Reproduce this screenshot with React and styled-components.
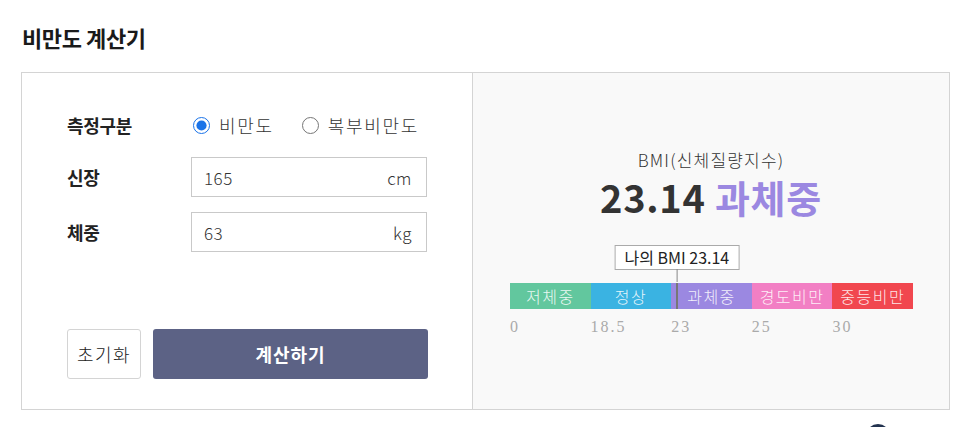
import React, { useState } from "react";
import styled, { createGlobalStyle } from "styled-components";

const GlobalStyle = createGlobalStyle`
  html, body {
    margin: 0;
    padding: 0;
    background: #fff;
    font-family: "Noto Sans CJK KR", "Noto Sans", sans-serif;
    color: #222;
  }
  * { box-sizing: border-box; }
`;

const Page = styled.div`
  position: relative;
  height: 427px;
  overflow: hidden;
  padding: 23px 14px 0 21px;
`;

const Title = styled.h2`
  margin: 0 0 20px 1px;
  font-size: 22px;
  font-weight: 700;
  line-height: 29px;
  letter-spacing: -0.4px;
  color: #1a1a1a;
`;

const Box = styled.div`
  display: grid;
  grid-template-columns: 451px 1fr;
  height: 338px;
  border: 1px solid #d4d4d4;
`;

const Form = styled.div`
  display: flex;
  flex-direction: column;
  padding: 35px 44px 30px 45px;
  border-right: 1px solid #d4d4d4;
  background: #fff;
`;

const Row = styled.div`
  display: grid;
  grid-template-columns: 124px 236px;
  align-items: center;
  height: ${p => p.$h || 40}px;
  margin-bottom: 15px;
`;

const Label = styled.div`
  font-size: 18px;
  font-weight: 700;
  color: #222;
  letter-spacing: -0.3px;
`;

const Options = styled.div`
  display: flex;
  align-items: center;
  gap: 26px;
`;

const Option = styled.label`
  display: flex;
  align-items: center;
  gap: 9px;
  font-size: 18px;
  font-weight: 300;
  letter-spacing: 1.7px;
  color: #333;
  cursor: pointer;
`;

const Radio = styled.input`
  width: 17px;
  height: 17px;
  margin: 0 0 0 2px;
  accent-color: #1a73e8;
`;

const Field = styled.div`
  display: flex;
  align-items: center;
  justify-content: space-between;
  height: 40px;
  padding: 0 14px 0 12px;
  border: 1px solid #c9c9c9;
  font-size: 17px;
  font-weight: 300;
  letter-spacing: 0.5px;
  color: #333;
`;

const Value = styled.input`
  width: 120px;
  border: 0;
  outline: 0;
  padding: 0;
  font: inherit;
  letter-spacing: inherit;
  color: inherit;
  background: transparent;
`;

const Buttons = styled.div`
  display: flex;
  gap: 12px;
  margin-top: auto;
`;

const Button = styled.button`
  height: 50px;
  padding: 0;
  border-radius: 3px;
  font-family: inherit;
  font-size: 18px;
  cursor: pointer;
  ${p =>
    p.$primary
      ? `flex: 1; border: 0; background: #5c6285; color: #fff; font-weight: 700; letter-spacing: 1px;`
      : `width: 74px; border: 1px solid #d4d4d4; background: #fff; color: #222; font-weight: 300; letter-spacing: 1.5px;`}
`;

const Result = styled.div`
  display: flex;
  flex-direction: column;
  align-items: center;
  padding-top: 76px;
  background: #f9f9f9;
`;

const Caption = styled.div`
  font-size: 17px;
  font-weight: 300;
  line-height: 22px;
  letter-spacing: 1.2px;
  color: #333;
`;

const Score = styled.div`
  margin-top: 3px;
  font-size: 38px;
  font-weight: 700;
  line-height: 46px;
  color: #333;
  letter-spacing: 0.7px;
`;

const Grade = styled.span`
  color: ${p => p.$color};
`;

const Gauge = styled.div`
  position: relative;
  width: 403px;
  margin-top: 63px;
  margin-left: 1px;
`;

const Bar = styled.div`
  display: grid;
  grid-template-columns: repeat(5, 1fr);
  height: 26px;
`;

const Segment = styled.div`
  display: flex;
  align-items: center;
  justify-content: center;
  background: ${p => p.$color};
  color: rgba(255, 255, 255, 0.88);
  font-size: 16px;
  font-weight: 300;
  letter-spacing: 1.5px;
`;

const Scale = styled.div`
  display: grid;
  grid-template-columns: repeat(5, 1fr);
  margin-top: 8px;
  font-family: "Liberation Serif", serif;
  font-size: 16px;
  line-height: 20px;
  letter-spacing: 2px;
  color: #aaa;
`;

const Marker = styled.div`
  position: absolute;
  top: 0;
  width: 2px;
  height: 26px;
  margin-left: -1px;
  background: #777;
`;

const Tip = styled.div`
  position: absolute;
  top: -38px;
  transform: translateX(-50%);
  height: 25px;
  padding: 0 9px;
  border: 1px solid #aaa;
  background: #fff;
  font-size: 16px;
  line-height: 23px;
  white-space: nowrap;
  color: #222;

  &::after {
    content: "";
    position: absolute;
    left: 50%;
    top: 100%;
    width: 1px;
    height: 13px;
    background: #888;
  }
`;

const Fab = styled.div`
  position: absolute;
  left: 866px;
  top: 424px;
  width: 24px;
  height: 24px;
  border-radius: 50%;
  background: #22324f;
`;

const grades = [
  { name: "저체중", from: 0, to: 18.5, color: "#62c79e" },
  { name: "정상", from: 18.5, to: 23, color: "#3ab3e2" },
  { name: "과체중", from: 23, to: 25, color: "#9b88e1" },
  { name: "경도비만", from: 25, to: 30, color: "#f27fc4" },
  { name: "중등비만", from: 30, to: 35, color: "#f1474f" },
];

export default function App() {
  const [mode, setMode] = useState("bmi");
  const [height, setHeight] = useState("165");
  const [weight, setWeight] = useState("63");

  const bmi = 23.14;
  const idx = grades.findIndex(g => bmi >= g.from && bmi < g.to);
  const g = grades[idx];
  const pos = ((idx + (bmi - g.from) / (g.to - g.from)) / grades.length) * 100;

  return (
    <Page>
      <GlobalStyle />
      <Title>비만도 계산기</Title>
      <Box>
        <Form>
          <Row $h={34}>
            <Label>측정구분</Label>
            <Options>
              <Option>
                <Radio type="radio" checked={mode === "bmi"} onChange={() => setMode("bmi")} />
                비만도
              </Option>
              <Option>
                <Radio type="radio" checked={mode === "waist"} onChange={() => setMode("waist")} />
                복부비만도
              </Option>
            </Options>
          </Row>
          <Row>
            <Label>신장</Label>
            <Field>
              <Value value={height} onChange={e => setHeight(e.target.value)} />
              cm
            </Field>
          </Row>
          <Row>
            <Label>체중</Label>
            <Field>
              <Value value={weight} onChange={e => setWeight(e.target.value)} />
              kg
            </Field>
          </Row>
          <Buttons>
            <Button>초기화</Button>
            <Button $primary>계산하기</Button>
          </Buttons>
        </Form>
        <Result>
          <Caption>BMI(신체질량지수)</Caption>
          <Score>
            {bmi.toFixed(2)} <Grade $color="#9b88e1">{g.name}</Grade>
          </Score>
          <Gauge>
            <Bar>
              {grades.map(s => (
                <Segment key={s.name} $color={s.color}>{s.name}</Segment>
              ))}
            </Bar>
            <Marker style={{ left: `${pos}%` }} />
            <Tip style={{ left: `${pos}%` }}>나의 BMI {bmi.toFixed(2)}</Tip>
            <Scale>
              {grades.map(s => (
                <span key={s.name}>{s.from}</span>
              ))}
            </Scale>
          </Gauge>
        </Result>
      </Box>
      <Fab />
    </Page>
  );
}
